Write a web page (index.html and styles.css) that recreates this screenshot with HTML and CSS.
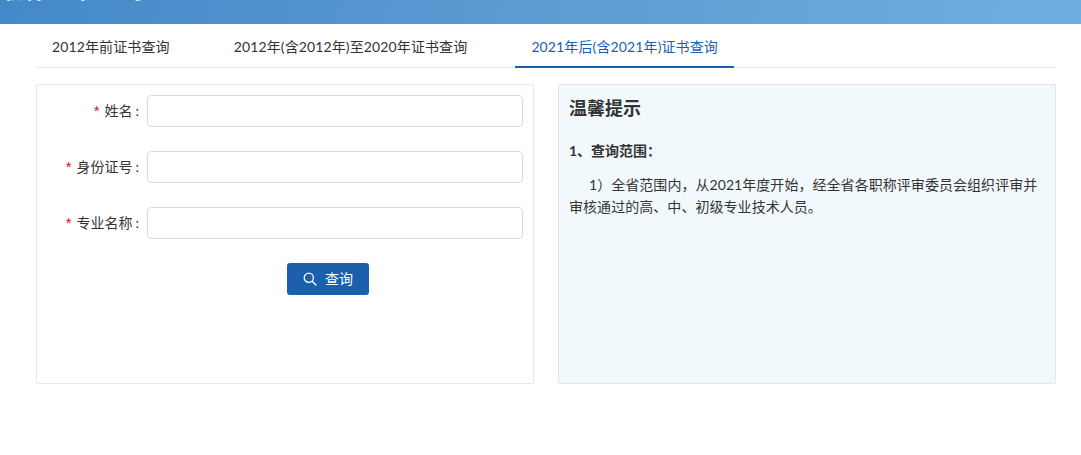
FILE: index.html
```html
<!DOCTYPE html>
<html lang="zh-CN">
<head>
<meta charset="utf-8">
<title>证书查询</title>
<link rel="stylesheet" href="styles.css">
</head>
<body>
<header class="banner"><span class="banner-title">职称证书查询 ›</span></header>
<main class="page">
  <nav class="tabs">
    <a class="tab">2012年前证书查询</a>
    <a class="tab">2012年(含2012年)至2020年证书查询</a>
    <a class="tab active">2021年后(含2021年)证书查询</a>
  </nav>
  <div class="columns">
    <form class="panel form">
      <div class="field"><label class="label"><i>*</i>姓名<b>:</b></label><input class="input"></div>
      <div class="field"><label class="label"><i>*</i>身份证号<b>:</b></label><input class="input"></div>
      <div class="field"><label class="label"><i>*</i>专业名称<b>:</b></label><input class="input"></div>
      <div class="actions">
        <button type="button" class="btn">
          <svg class="btn-icon" viewBox="0 0 14 14" width="14" height="14"><circle cx="5.8" cy="5.8" r="4.6" fill="none" stroke="currentColor" stroke-width="1.3"/><path d="M9.2 9.2L13 13" fill="none" stroke="currentColor" stroke-width="1.4" stroke-linecap="round"/></svg>
          <span class="btn-text">查询</span>
        </button>
      </div>
    </form>
    <aside class="panel tips">
      <h2 class="tips-title">温馨提示</h2>
      <p class="tips-head">1、查询范围：</p>
      <p class="tips-body">1）全省范围内，从2021年度开始，经全省各职称评审委员会组织评审并审核通过的高、中、初级专业技术人员。</p>
    </aside>
  </div>
</main>
</body>
</html>
```
FILE: styles.css
```css
* { box-sizing: border-box; }
html, body { margin: 0; padding: 0; background: #fff; }
body { font-family: Lato, "Noto Sans CJK SC", "Liberation Sans", sans-serif; font-size: 14px; color: #333; height: 455px; overflow: hidden; }
.banner { height: 24px; overflow: hidden; background: linear-gradient(100deg, #4389c9 0%, #5f9dd4 55%, #70ade2 100%); }
.banner-title { display: block; margin-top: -25px; color: #fff; font-size: 24px; font-weight: 700; line-height: 28px; }
.page { padding: 0 25px 0 36px; }
.tabs { display: flex; height: 44px; border-bottom: 1px solid #e8e8e8; }
.tab { padding: 0 16px; line-height: 46px; height: 44px; margin-right: 32px; color: #333; letter-spacing: 0.12px; }
.tab.active { color: #1b5fad; border-bottom: 2px solid #1b5fad; margin-right: 0; }
.columns { display: flex; gap: 24px; margin-top: 16px; }
.panel { height: 300px; border: 1px solid #e8e8e8; border-radius: 2px; }
.form { width: 498px; padding: 10px 10px 0 0; }
.field { display: flex; align-items: center; height: 32px; margin-bottom: 24px; }
.label { width: 110px; padding-right: 8px; padding-bottom: 2px; text-align: right; flex: none; color: #333; white-space: nowrap; }
.label i { color: #d0121b; font-family: "Liberation Sans", sans-serif; font-style: normal; font-size: 15px; margin-right: 5px; }
.label b { font-weight: 400; margin-left: 3px; }
.input { flex: 1; min-width: 0; height: 32px; border: 1px solid #d9d9d9; border-radius: 4px; background: #fff; }
.actions { display: flex; justify-content: center; padding-left: 96px; }
.btn { display: flex; align-items: center; gap: 8px; height: 32px; width: 82px; justify-content: center; border: 0; border-radius: 3px; background: #1b5fad; color: #fff; font: inherit; }
.btn-text { position: relative; top: -1px; }
.tips { flex: 1; padding: 8px 10px; background: #f2f9fd; border-color: #dfe8ee; color: #333; }
.tips-title { margin: 0; font-size: 18px; line-height: 30px; font-weight: 700; }
.tips-head { margin: 17px 0 0; font-weight: 700; line-height: 22px; font-size: 14px; }
.tips-body { margin: 12px 0 0; text-indent: 20px; line-height: 22px; font-size: 14px; letter-spacing: 0.05px; }
```
